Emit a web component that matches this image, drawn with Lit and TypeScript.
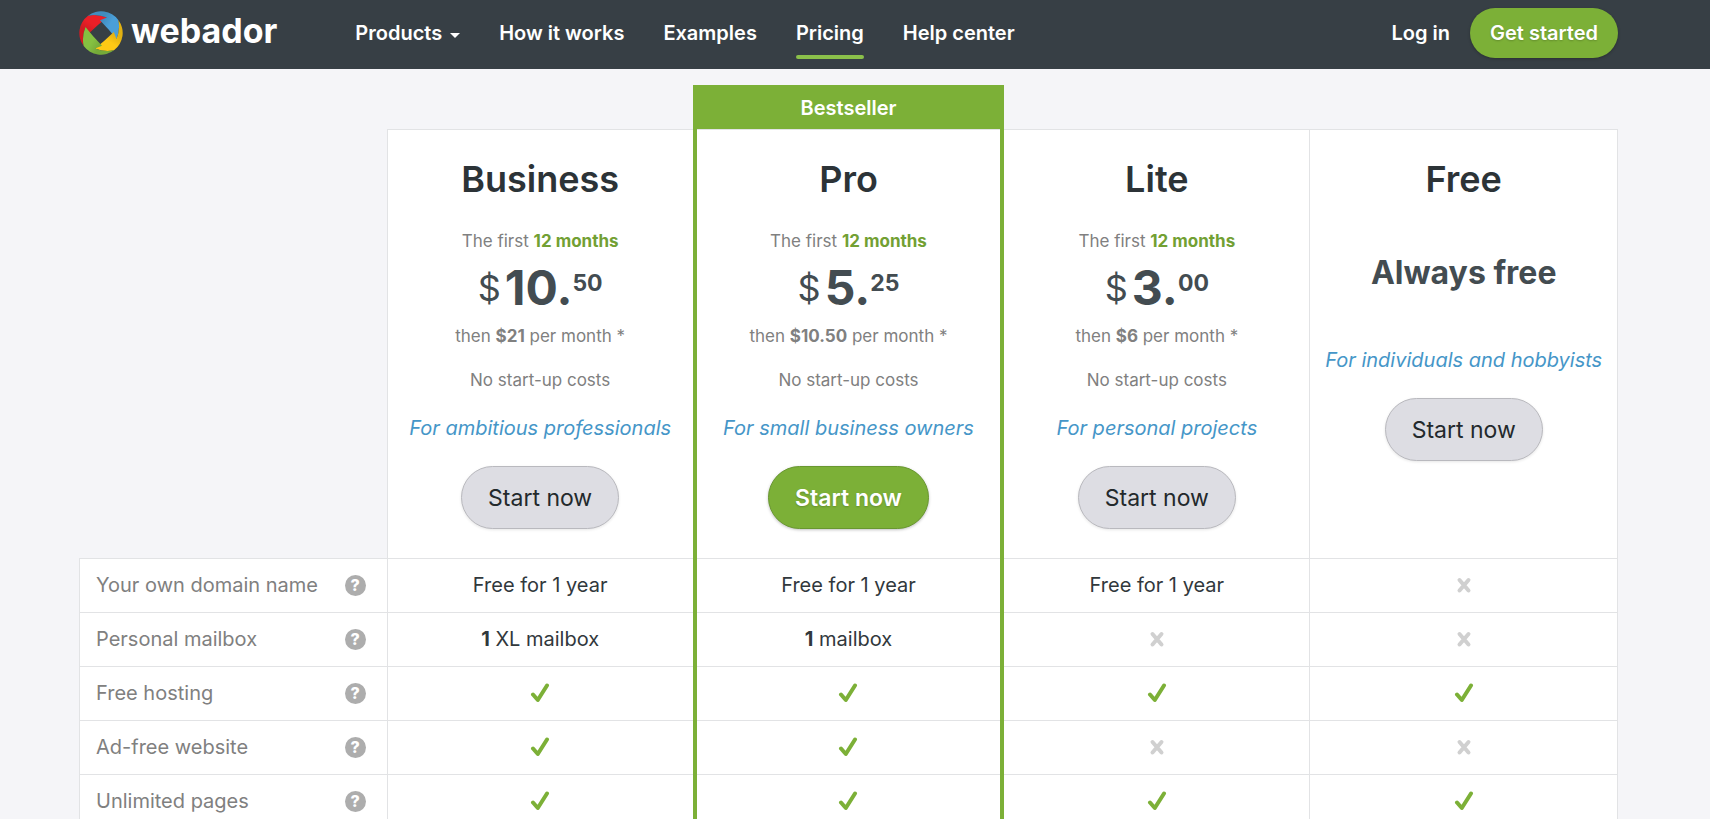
import { LitElement, html, css, svg, TemplateResult } from "lit";
import { customElement } from "lit/decorators.js";
import { classMap } from "lit/directives/class-map.js";

interface Plan {
  name: string;
  whole?: string;
  cents?: string;
  renewal?: string;
  tagline: string;
  featured?: boolean;
}

type Value = boolean | TemplateResult;

const plans: Plan[] = [
  { name: "Business", whole: "10.", cents: "50", renewal: "$21", tagline: "For ambitious professionals" },
  { name: "Pro", whole: "5.", cents: "25", renewal: "$10.50", tagline: "For small business owners", featured: true },
  { name: "Lite", whole: "3.", cents: "00", renewal: "$6", tagline: "For personal projects" },
  { name: "Free", tagline: "For individuals and hobbyists" },
];

const year = html`Free for 1 year`;

const features: { label: string; values: Value[] }[] = [
  { label: "Your own domain name", values: [year, year, year, false] },
  { label: "Personal mailbox", values: [html`<b>1</b> XL mailbox`, html`<b>1</b> mailbox`, false, false] },
  { label: "Free hosting", values: [true, true, true, true] },
  { label: "Ad-free website", values: [true, true, false, false] },
  { label: "Unlimited pages", values: [true, true, true, true] },
];

const base = css`
  * { box-sizing: border-box; }
  a { color: inherit; text-decoration: none; }
  .container {
    max-width: 1539px;
    margin: 0 auto;
  }
`;

@customElement("site-header")
class SiteHeader extends LitElement {
  static styles = [base, css`
    :host {
      display: block;
      background: #373f45;
      color: #fff;
      padding: 8px 92px 11px 79px;
      font-weight: 600;
      line-height: 28px;
    }
    .container { display: flex; align-items: center; }
    .brand { display: flex; align-items: center; gap: 8px; }
    .logo { width: 44px; height: 44px; display: block; }
    .name { font-size: 34px; font-weight: 700; line-height: 40px; padding-bottom: 5px; }
    nav { display: flex; gap: 39px; margin-left: 78px; }
    .link { position: relative; display: flex; align-items: center; gap: 8px; white-space: nowrap; }
    .caret { border: 5px solid transparent; border-top-color: #fff; border-bottom: 0; margin-top: 4px; }
    .active::after {
      content: "";
      position: absolute;
      left: 0;
      right: 0;
      top: 36px;
      height: 4px;
      border-radius: 2px;
      background: #8bc04a;
    }
    .account { display: flex; align-items: center; gap: 20px; margin-left: auto; white-space: nowrap; }
    .cta {
      background: #7cb037;
      border-radius: 25px;
      padding: 11px 20px;
      text-shadow: 0 1px 2px rgba(0, 0, 0, 0.2);
      box-shadow: 0 1px 3px rgba(0, 0, 0, 0.25);
    }
  `];

  render() {
    const petals = ["#ec1f27", "#4a9fd8", "#ffc915", "#85c141"];
    return html`
      <div class="container">
        <a class="brand" href="#">
          <svg class="logo" viewBox="-22 -22 44 44" aria-hidden="true">
            <defs>
              <linearGradient id="fold" x1="-13" y1="-1" x2="-6" y2="-12" gradientUnits="userSpaceOnUse">
                <stop offset="0" stop-color="#000" stop-opacity="0.12"></stop>
                <stop offset="0.7" stop-color="#000" stop-opacity="0"></stop>
              </linearGradient>
            </defs>
            ${petals.map((fill, i) => {
              const d = "M6-15.5Q-3-8.5-12.8 1L-15.5-6Q-19.5 4-17.3 13A21.6 21.6 0 0 1-13-17.3Q-4-19.5 6-15.5Z";
              return svg`<g transform="rotate(${i * 90})"><path d=${d} fill=${fill}></path><path d=${d} fill="url(#fold)"></path></g>`;
            })}
          </svg>
          <span class="name">webador</span>
        </a>
        <nav>
          <a class="link" href="#">Products<span class="caret"></span></a>
          <a class="link" href="#">How it works</a>
          <a class="link" href="#">Examples</a>
          <a class="link active" href="#" aria-current="page">Pricing</a>
          <a class="link" href="#">Help center</a>
        </nav>
        <div class="account">
          <a href="#">Log in</a>
          <a class="cta" href="#">Get started</a>
        </div>
      </div>`;
  }
}

@customElement("plan-summary")
class PlanSummary extends LitElement {
  static properties = { plan: { attribute: false } };
  declare plan: Plan;

  static styles = [base, css`
    :host {
      display: flex;
      flex-direction: column;
      align-items: center;
      padding: 27px 8px 29px;
      color: #808080;
      font-size: 17px;
      line-height: 24px;
      font-weight: 400;
      white-space: nowrap;
    }
    h2, p { margin: 0; }
    h2 { font-size: 36px; line-height: 44px; font-weight: 600; color: #2c3337; }
    b { font-weight: 700; }
    .intro { margin-top: 28px; }
    .intro b { color: #72a033; }
    .price { display: flex; align-items: center; height: 60px; margin: 5px 0 6px; color: #434c51; font-weight: 700; }
    .currency { font-size: 36px; line-height: 60px; font-weight: 400; margin-right: 4px; }
    .whole { font-size: 48px; line-height: 60px; }
    .cents { font-size: 23px; line-height: 50px; align-self: flex-start; }
    .setup { margin-top: 20px; }
    .free { margin: 52px 0 31px; font-size: 32px; line-height: 40px; font-weight: 700; color: #434c51; }
    .tagline { margin-top: 22px; font-size: 20px; line-height: 28px; font-style: italic; color: #4596c8; }
    button {
      margin-top: 24px;
      height: 63px;
      padding: 2px 26px 0;
      font: inherit;
      font-size: 23px;
      color: #23292c;
      background: #dddde3;
      border: 1px solid #b9b9be;
      border-radius: 32px;
      box-shadow: 0 1px 3px rgba(0, 0, 0, 0.1);
    }
    .featured {
      color: #fff;
      font-weight: 600;
      background: #7cb037;
      border-color: #699730;
      text-shadow: 0 1px 2px rgba(0, 0, 0, 0.2);
      box-shadow: 0 1px 3px rgba(0, 0, 0, 0.25);
    }
  `];

  render() {
    const { name, whole, cents, renewal, tagline, featured } = this.plan;
    return html`
      <h2>${name}</h2>
      ${whole
        ? html`
          <p class="intro">The first <b>12 months</b></p>
          <div class="price">
            <span class="currency">$</span><span class="whole">${whole}</span><span class="cents">${cents}</span>
          </div>
          <p>then <b>${renewal}</b> per month *</p>
          <p class="setup">No start-up costs</p>`
        : html`<p class="free">Always free</p>`}
      <p class="tagline">${tagline}</p>
      <button type="button" class=${classMap({ featured: !!featured })}>Start now</button>`;
  }
}

@customElement("pricing-table")
class PricingTable extends LitElement {
  static styles = [base, css`
    :host { display: block; padding: 16px 92px 0 79px; }
    table {
      width: 100%;
      border-collapse: collapse;
      table-layout: fixed;
      line-height: 27px;
      color: #31383c;
    }
    th, td { padding: 0; font-weight: 400; text-align: center; }
    .badge {
      height: 44px;
      padding-top: 4px;
      background: #7cb037;
      color: #fff;
      font-weight: 600;
      border: 4px solid #7cb037;
      border-width: 0 4px;
    }
    .cell { background: #fff; border: 1px solid #e2e3e5; vertical-align: top; }
    .pro { border-left: 4px solid #7cb037; border-right: 4px solid #7cb037; }
    .feature { padding: 13px 8px; }
    .head { color: #808080; padding: 13px 21px 13px 16px; }
    .label { display: flex; align-items: center; justify-content: space-between; white-space: nowrap; }
    .help {
      width: 21px;
      height: 21px;
      padding: 0;
      border: 0;
      border-radius: 50%;
      background: #adadad;
      color: #fff;
      font: inherit;
      font-size: 16px;
      font-weight: 800;
      line-height: 21px;
    }
    .mark { display: block; width: 20px; height: 20px; margin: 3px auto 4px; fill: none; stroke-linecap: round; }
    .yes { stroke: #7cb037; stroke-width: 4; stroke-linejoin: round; }
    .no { stroke: #d0d0d0; stroke-width: 4; }
    b { font-weight: 700; }
  `];

  private value(v: Value) {
    if (v === true) {
      return html`<svg class="mark yes" viewBox="0 0 20 20" role="img" aria-label="Included"><path d="M3 11.5L7.8 17L17 2.5"></path></svg>`;
    }
    if (v === false) {
      return html`<svg class="mark no" viewBox="0 0 20 20" role="img" aria-label="Not included"><path d="M5.5 5L14.5 15.5M14.5 5L5.5 15.5"></path></svg>`;
    }
    return v;
  }

  render() {
    return html`
      <div class="container">
        <table>
          <thead>
            <tr>
              <td></td>
              ${plans.map((p) => (p.featured ? html`<th class="badge">Bestseller</th>` : html`<td></td>`))}
            </tr>
            <tr>
              <td></td>
              ${plans.map((p) => html`
                <th scope="col" class=${classMap({ cell: true, pro: !!p.featured })}>
                  <plan-summary .plan=${p}></plan-summary>
                </th>`)}
            </tr>
          </thead>
          <tbody>
            ${features.map((f) => html`
              <tr>
                <th scope="row" class="cell head">
                  <div class="label">${f.label}<button type="button" class="help" aria-label="About: ${f.label}">?</button></div>
                </th>
                ${f.values.map((v, i) => html`
                  <td class=${classMap({ cell: true, feature: true, pro: !!plans[i].featured })}>${this.value(v)}</td>`)}
              </tr>`)}
          </tbody>
        </table>
      </div>`;
  }
}

@customElement("app-root")
class AppRoot extends LitElement {
  static styles = css`
    :host {
      display: block;
      min-height: 100vh;
      background: #f5f5f8;
      font-family: Inter, "Open Sans", sans-serif;
      font-size: 20px;
    }
  `;

  render() {
    return html`<site-header></site-header><pricing-table></pricing-table>`;
  }
}
